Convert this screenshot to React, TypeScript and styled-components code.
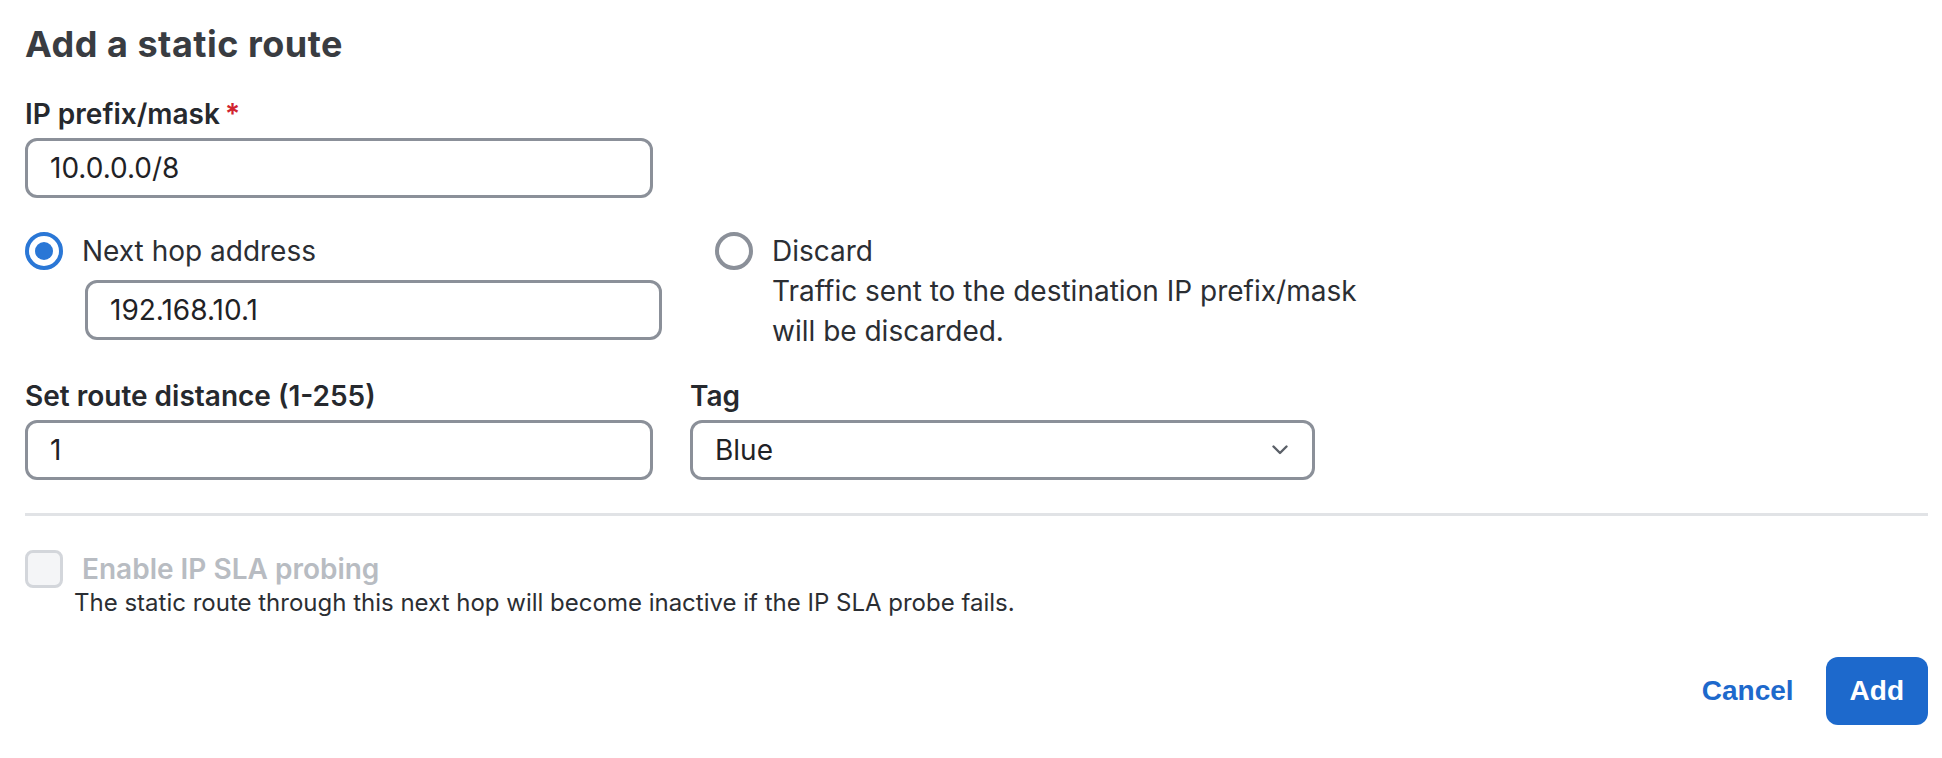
import styled, { createGlobalStyle } from "styled-components";

const GlobalStyle = createGlobalStyle`
    * {
        box-sizing: border-box;
    }

    body {
        margin: 0;
        background: #ffffff;
        font-family: Inter, "Noto Sans", sans-serif;
        color: #2b2e33;
    }
`;

const StyledPage = styled.div`
    padding: 22px 14px 32px 25px;
    display: flex;
    flex-flow: column nowrap;
`;

const StyledTitle = styled.h1`
    margin: 0 0 28px 0;
    font-size: 36px;
    line-height: 44px;
    font-weight: 700;
    letter-spacing: 0.5px;
    color: #393c41;
`;

const StyledField = styled.div<{ $width: number }>`
    display: flex;
    flex-flow: column nowrap;
    gap: 4px;
    width: ${(p) => p.$width}px;
`;

const StyledLabel = styled.label`
    font-size: 28px;
    line-height: 40px;
    font-weight: 600;
    color: #26292e;
`;

const StyledRequired = styled.span`
    color: #d1242f;
    margin-left: 5px;
`;

const StyledInput = styled.input<{ $width?: number }>`
    height: 60px;
    width: ${(p) => (p.$width ? `${p.$width}px` : "100%")};
    border: 3px solid #8b9099;
    border-radius: 12px;
    padding: 0 22px;
    font-family: Inter, "Noto Sans", sans-serif;
    font-size: 28px;
    color: #1f2226;
    background: #ffffff;
    outline: none;
`;

const StyledRadioGroup = styled.div`
    margin-top: 33px;
    display: flex;
    flex-flow: row nowrap;
    gap: 53px;
`;

const StyledRadioOption = styled.div<{ $width?: number }>`
    display: flex;
    flex-flow: column nowrap;
    width: ${(p) => (p.$width ? `${p.$width}px` : "auto")};
`;

const StyledRadioRow = styled.div`
    display: flex;
    align-items: center;
    gap: 19px;
    height: 40px;
    font-size: 28px;
    line-height: 40px;
    color: #2b2e33;
`;

const StyledRadio = styled.span<{ $checked: boolean }>`
    flex: none;
    width: 38px;
    height: 38px;
    border-radius: 50%;
    border: 4px solid ${(p) => (p.$checked ? "#2a77d6" : "#8b9099")};
    display: grid;
    place-items: center;

    &::after {
        content: "";
        width: 18px;
        height: 18px;
        border-radius: 50%;
        background: ${(p) => (p.$checked ? "#2a77d6" : "transparent")};
    }
`;

const StyledNestedInput = styled.div`
    margin: 9px 0 0 60px;
`;

const StyledDescription = styled.p`
    margin: 0 0 0 57px;
    font-size: 28px;
    line-height: 40px;
    color: #2b2e33;
`;

const StyledFieldRow = styled.div`
    margin-top: 25px;
    display: grid;
    grid-template-columns: 628px 625px;
    column-gap: 37px;
`;

const StyledSelect = styled.div`
    height: 60px;
    border: 3px solid #8b9099;
    border-radius: 12px;
    padding: 0 24px 0 22px;
    display: flex;
    align-items: center;
    justify-content: space-between;
    font-size: 28px;
    color: #1f2226;
    background: #ffffff;
`;

const StyledDivider = styled.hr`
    margin: 33px 0 0 0;
    border: none;
    height: 3px;
    background: #e1e3e6;
`;

const StyledCheckRow = styled.div`
    margin-top: 33px;
    display: flex;
    align-items: center;
    gap: 19px;
    height: 40px;
`;

const StyledCheckbox = styled.span`
    flex: none;
    width: 38px;
    height: 38px;
    border: 3px solid #d3d6db;
    border-radius: 8px;
    background: #f4f5f7;
`;

const StyledDisabledLabel = styled.span`
    font-size: 28px;
    line-height: 40px;
    font-weight: 600;
    color: #b8bcc2;
`;

const StyledHelp = styled.p`
    margin: 0 0 0 49px;
    font-size: 24px;
    line-height: 28px;
    color: #2b2e33;
`;

const StyledFooter = styled.div`
    margin-top: 40px;
    display: flex;
    justify-content: flex-end;
    gap: 8px;
`;

const StyledButton = styled.button<{ $primary?: boolean }>`
    height: 68px;
    padding: 0 24px;
    border: none;
    border-radius: 12px;
    font-family: "Liberation Sans", Arial, sans-serif;
    font-size: 28px;
    font-weight: 700;
    cursor: pointer;
    background: ${(p) => (p.$primary ? "#1d69cc" : "transparent")};
    color: ${(p) => (p.$primary ? "#ffffff" : "#1d69cc")};
`;

function Chevron() {
    return (
        <svg width="16" height="10" viewBox="0 0 16 10" fill="none">
            <path d="M1.5 1.5 L8 8 L14.5 1.5" stroke="#5b6068" strokeWidth="2.4" strokeLinecap="round" strokeLinejoin="round" />
        </svg>
    );
}

function App() {
    return (
        <>
            <GlobalStyle />
            <StyledPage>
                <StyledTitle>Add a static route</StyledTitle>

                <StyledField $width={628}>
                    <StyledLabel>
                        IP prefix/mask<StyledRequired>*</StyledRequired>
                    </StyledLabel>
                    <StyledInput readOnly value="10.0.0.0/8" />
                </StyledField>

                <StyledRadioGroup>
                    <StyledRadioOption $width={637}>
                        <StyledRadioRow>
                            <StyledRadio $checked={true} />
                            Next hop address
                        </StyledRadioRow>
                        <StyledNestedInput>
                            <StyledInput readOnly value="192.168.10.1" $width={577} />
                        </StyledNestedInput>
                    </StyledRadioOption>
                    <StyledRadioOption>
                        <StyledRadioRow>
                            <StyledRadio $checked={false} />
                            Discard
                        </StyledRadioRow>
                        <StyledDescription>
                            Traffic sent to the destination IP prefix/mask
                            <br />
                            will be discarded.
                        </StyledDescription>
                    </StyledRadioOption>
                </StyledRadioGroup>

                <StyledFieldRow>
                    <StyledField $width={628}>
                        <StyledLabel>Set route distance (1-255)</StyledLabel>
                        <StyledInput readOnly value="1" />
                    </StyledField>
                    <StyledField $width={625}>
                        <StyledLabel>Tag</StyledLabel>
                        <StyledSelect>
                            <span>Blue</span>
                            <Chevron />
                        </StyledSelect>
                    </StyledField>
                </StyledFieldRow>

                <StyledDivider />

                <StyledCheckRow>
                    <StyledCheckbox />
                    <StyledDisabledLabel>Enable IP SLA probing</StyledDisabledLabel>
                </StyledCheckRow>
                <StyledHelp>
                    The static route through this next hop will become inactive if the IP SLA probe fails.
                </StyledHelp>

                <StyledFooter>
                    <StyledButton>Cancel</StyledButton>
                    <StyledButton $primary>Add</StyledButton>
                </StyledFooter>
            </StyledPage>
        </>
    );
}

export default App;
